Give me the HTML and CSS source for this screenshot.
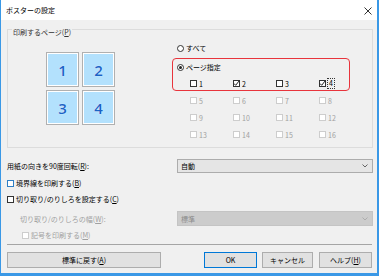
FILE: index.html
```html
<!DOCTYPE html>
<html lang="ja">
<head>
<meta charset="utf-8">
<title>ポスターの設定</title>
<link rel="stylesheet" href="styles.css">
</head>
<body>
<div class="win">
  <div class="titlebar">
    <span class="title">ポスターの設定</span>
    <svg class="close" width="8" height="8" viewBox="0 0 8 8"><path d="M0.5 0.5 L7.5 7.5 M7.5 0.5 L0.5 7.5" stroke="#333" stroke-width="1"/></svg>
  </div>
  <div class="main">
    <div class="group">
      <div class="gtitle">印刷するページ(<u>P</u>)</div>
      <div class="gbody">
        <div class="tiles">
          <div class="tile">1</div>
          <div class="tile">2</div>
          <div class="tile">3</div>
          <div class="tile">4</div>
        </div>
        <div class="opts">
          <div class="radio-row"><span class="radio"></span><span>すべて</span></div>
          <div class="radio-row r2"><span class="radio on"></span><span>ページ指定</span></div>
          <div class="pages">
            <div class="cbi"><span class="cb"></span><span>1</span></div>
            <div class="cbi"><span class="cb"><svg width="7" height="7" viewBox="0 0 7 7"><path d="M0.8 3.4 L2.7 5.3 L6.2 0.8" fill="none" stroke="#222" stroke-width="1"/></svg></span><span>2</span></div>
            <div class="cbi"><span class="cb"></span><span>3</span></div>
            <div class="cbi"><span class="cb"><svg width="7" height="7" viewBox="0 0 7 7"><path d="M0.8 3.4 L2.7 5.3 L6.2 0.8" fill="none" stroke="#222" stroke-width="1"/></svg></span><span class="focus">4</span></div>
            <div class="cbi dis"><span class="cb"></span><span>5</span></div>
            <div class="cbi dis"><span class="cb"></span><span>6</span></div>
            <div class="cbi dis"><span class="cb"></span><span>7</span></div>
            <div class="cbi dis"><span class="cb"></span><span>8</span></div>
            <div class="cbi dis"><span class="cb"></span><span>9</span></div>
            <div class="cbi dis"><span class="cb"></span><span>10</span></div>
            <div class="cbi dis"><span class="cb"></span><span>11</span></div>
            <div class="cbi dis"><span class="cb"></span><span>12</span></div>
            <div class="cbi dis"><span class="cb"></span><span>13</span></div>
            <div class="cbi dis"><span class="cb"></span><span>14</span></div>
            <div class="cbi dis"><span class="cb"></span><span>15</span></div>
            <div class="cbi dis"><span class="cb"></span><span>16</span></div>
          </div>
        </div>
      </div>
      <div class="highlight"></div>
    </div>

    <div class="row r-orient">
      <span>用紙の向きを90度回転(<u>R</u>):</span>
      <div class="select"><span>自動</span><svg width="6" height="4" viewBox="0 0 6 4"><path d="M0.5 0.5 L3 3 L5.5 0.5" fill="none" stroke="#555" stroke-width="0.9"/></svg></div>
    </div>
    <div class="row r-border"><span class="cb blue"></span><span>境界線を印刷する(<u>B</u>)</span></div>
    <div class="row r-cut"><span class="cb"></span><span>切り取り/のりしろを設定する(<u>C</u>)</span></div>
    <div class="row r-width dis">
      <span class="indent">切り取り/のりしろの幅(<u>W</u>):</span>
      <div class="select off"><span>標準</span><svg width="6" height="4" viewBox="0 0 6 4"><path d="M0.5 0.5 L3 3 L5.5 0.5" fill="none" stroke="#a8a8a8" stroke-width="0.9"/></svg></div>
    </div>
    <div class="row r-mark dis"><span class="cb"></span><span>記号を印刷する(<u>M</u>)</span></div>
    <div class="sep"></div>
    <div class="buttons">
      <div class="btn wide">標準に戻す(<u>A</u>)</div>
      <div class="btn ok">OK</div>
      <div class="btn cancel">キャンセル</div>
      <div class="btn help">ヘルプ(<u>H</u>)</div>
    </div>
  </div>
</div>
</body>
</html>
```
FILE: styles.css
```css
* { box-sizing: border-box; margin: 0; padding: 0; }
body {
  width: 379px; height: 276px; overflow: hidden;
  font-family: "Noto Sans CJK JP", "Noto Sans", sans-serif;
  font-size: 7px; line-height: 10px; color: #000; background: #f0f0f0;
}
u { text-decoration: underline; text-underline-offset: 1px; }
.win {
  width: 379px; height: 276px;
  border-left: 1px solid #3a98e6; border-right: 2px solid #3a98e6; border-bottom: 3px solid #3a98e6;
  display: flex; flex-direction: column; background: #f0f0f0;
}
.titlebar {
  height: 20px; flex: none; background: #fff;
  display: flex; align-items: center; justify-content: space-between;
  padding: 0 5px;
}
.close { display: block; margin-top: 1px; }
.main { padding: 0 0 0 6px; width: 372px; }

.group {
  position: relative; margin-top: 9px; width: 366px; height: 119px;
  border: 1px solid #dcdcdc;
}
.gtitle {
  margin: -3px 0 0 4px; padding: 0 1px; width: fit-content;
  background: #f0f0f0; color: #333;
}
.gbody { display: flex; align-items: flex-start; padding-left: 38px; }
.tiles {
  margin-top: 15px;
  display: grid; grid-template-columns: 33px 33px; grid-template-rows: 35px 35px; gap: 3px;
}
.tile {
  background: #b3e1fd; border: 1px solid #b0b0b0; box-shadow: inset 0 0 0 1px #fff;
  display: flex; align-items: center; justify-content: center;
  font-family: "Open Sans", "Noto Sans", sans-serif; font-weight: 600; font-size: 15px;
  color: #1b63c6; text-shadow: 0 0 1px #fff;
}
.opts { margin-left: 62px; padding-top: 6px; }
.radio-row { display: flex; align-items: center; gap: 2px; height: 10px; }
.radio-row.r2 { margin-top: 9px; }
.radio {
  width: 7px; height: 7px; border: 1px solid #333; border-radius: 50%; background: #fff;
  display: flex; align-items: center; justify-content: center;
}
.radio.on::after { content: ""; width: 3px; height: 3px; border-radius: 50%; background: #222; }
.pages {
  margin: 3px 0 0 13px;
  display: grid; grid-template-columns: repeat(4, 43px); grid-auto-rows: 17px;
}
.cbi { display: flex; align-items: center; gap: 2px; }
.cb {
  flex: none; width: 7px; height: 7px; border: 1px solid #333; background: #fff;
  display: flex; align-items: center; justify-content: center;
}
.cb svg { display: block; flex: none; }
.cb.blue { border-color: #2e7fc6; }
.dis { color: #a0a0a0; }
.dis .cb { border-color: #cdcdcd; }
.focus { outline: 1px dotted #333; outline-offset: 0; padding: 0 1px; line-height: 9px; }
.highlight {
  position: absolute; left: 164px; top: 28px; width: 178px; height: 33px;
  border: 1.5px solid #e8343c; border-radius: 4px; pointer-events: none;
}

.row { display: flex; align-items: center; gap: 2px; width: 366px; height: 10px; }
.r-orient { margin-top: 11px; height: 14px; justify-content: space-between; }
.r-border { margin-top: 5px; }
.r-cut { margin-top: 6px; }
.r-width { margin-top: 7px; height: 15px; justify-content: space-between; }
.r-width .indent { padding-left: 13px; }
.r-mark { margin-top: 4px; padding-left: 15px; }
.select {
  width: 196px; height: 100%; background: #e5e5e5; border: 1px solid #acacac;
  display: flex; align-items: center; justify-content: space-between; padding: 0 4px 0 3px;
}
.select.off { background: #cccccc; border-color: #c4c4c4; color: #8c8c8c; }
.sep { margin-top: 4px; width: 365px; height: 1px; background: #a5a5a5; }
.buttons { margin-top: 7px; display: flex; width: 365px; height: 16px; }
.btn {
  height: 16px; background: #e1e1e1; border: 1px solid #adadad;
  display: flex; align-items: center; justify-content: center;
}
.btn.wide { width: 154px; }
.btn.ok { width: 53px; margin-left: auto; border-color: #0078d7; }
.btn.cancel { width: 51px; margin-left: 5px; }
.btn.help { width: 53px; margin-left: 6px; }
```
